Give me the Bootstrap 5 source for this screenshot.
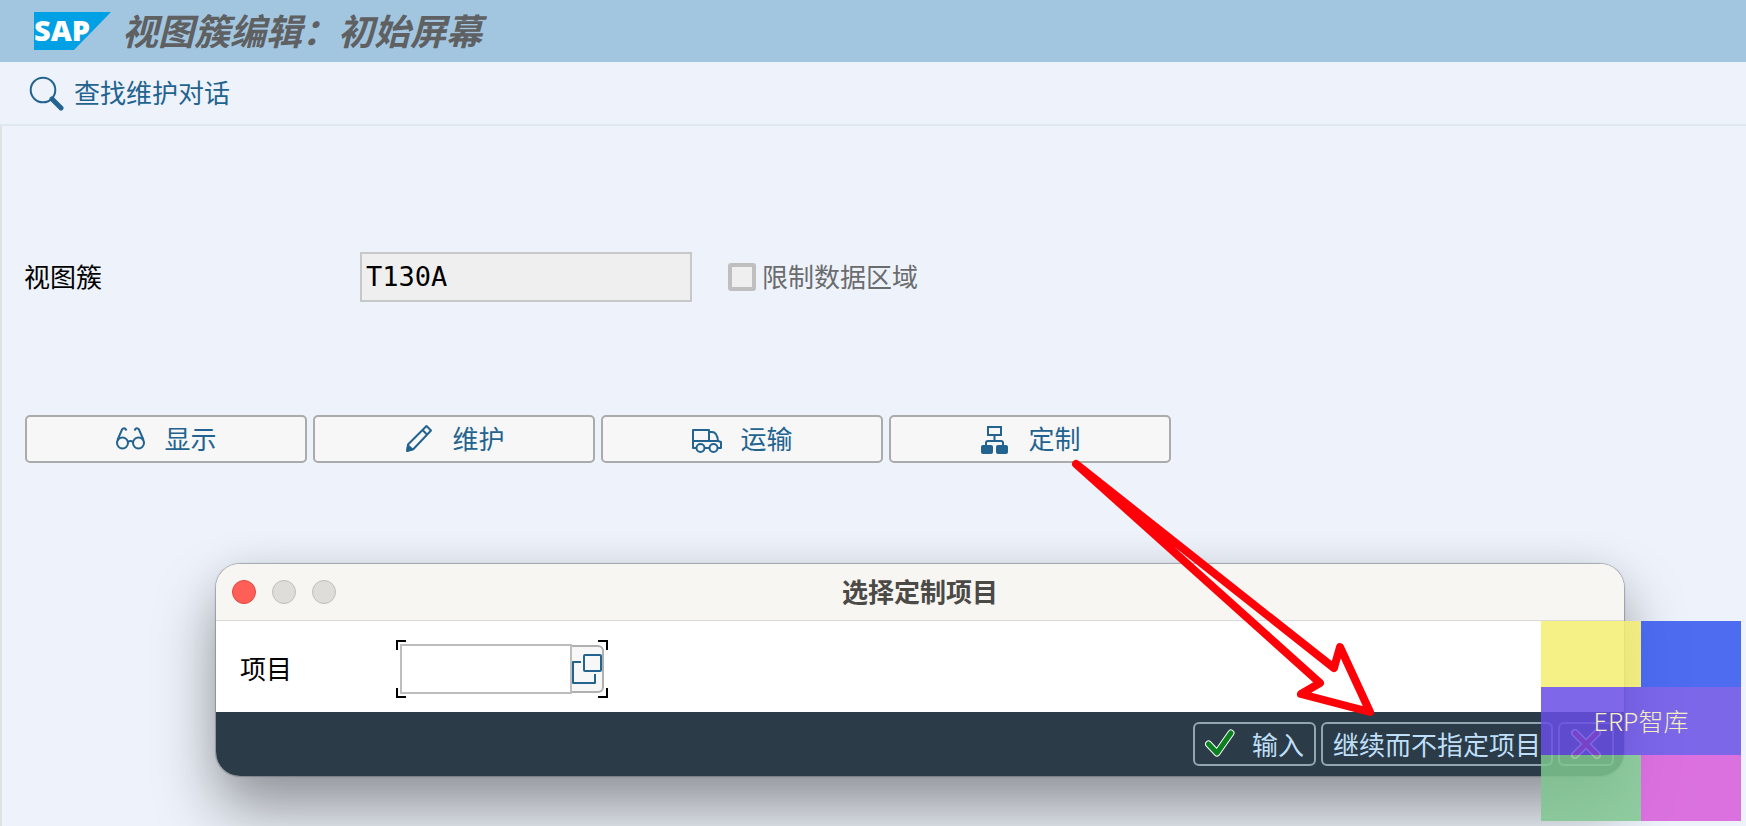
<!DOCTYPE html>
<html lang="zh-CN">
<head>
<meta charset="utf-8">
<meta name="viewport" content="width=device-width, initial-scale=1">
<title>视图簇编辑：初始屏幕</title>
<link href="https://cdn.jsdelivr.net/npm/bootstrap@5.3.0/dist/css/bootstrap.min.css" rel="stylesheet">
<style>
  :root { --sap-blue: #23638f; }
  body { font-family: "Noto Sans CJK SC", sans-serif; font-size: 26px; line-height: 32px; color: #000; background: #eef3fb; }
  .title-bar { height: 62px; padding: 0 0 4px 34px; gap: 10px; background: #a2c6e0; }
  .title-bar h1 { font-size: 36px; line-height: 48px; font-weight: 700; font-style: italic; color: #5f6062; }
  .tool-bar { height: 64px; padding: 0 0 2px 28px; border-bottom: 2px solid #dfe7f1; }
  .tool-link { gap: 8px; color: var(--sap-blue); }
  .work-area { border-left: 2px solid #dfe1e5; padding: 126px 0 0 22px; }
  .cluster-row label { padding-bottom: 2px; }
  .field-label { width: 336px; }
  .cluster-input { width: 332px; height: 50px; padding: 0 4px 2px; border: 2px solid #c6c8ca; border-radius: 0; font: 27px/32px "DejaVu Sans Mono", monospace; color: #000; }
  .cluster-input:disabled { background: #efefef; opacity: 1; }
  .limit-check { margin-left: 36px; gap: 6px; color: #6b6c6e; }
  .limit-check input { appearance: none; width: 28px; height: 28px; margin: 0; border: 4px solid #bfbfbf; border-radius: 3px; background: #efefef; }
  .action-row { gap: 6px; margin-top: 113px; padding-left: 1px; max-width: 1147px; }
  .action-btn { flex: 1 1 0; height: 48px; gap: 17px; padding: 0 0 2px; border: 2px solid #ababab; border-radius: 5px; background: #f7f7f7; color: var(--sap-blue); font-size: 26px; line-height: 32px; }
  .dialog-window { margin: 101px 122px 48px 192px; border-radius: 24px; background: #fff; box-shadow: 0 0 1px 1px rgba(70,80,90,.4), 0 34px 62px rgba(0,0,0,.38), 0 0 40px rgba(0,0,0,.06); }
  .dialog-head { height: 57px; padding: 0 16px; border-bottom: 1px solid #d9d9d7; background: #f7f6f2; border-radius: 24px 24px 0 0; }
  .dialog-head h2 { font-size: 26px; line-height: 32px; font-weight: 700; color: #4b4a46; padding-bottom: 2px; }
  .lights { flex: 1 1 0; gap: 16px; }
  .light-dot { width: 24px; height: 24px; padding: 0; border: 1px solid #bfbeba; border-radius: 50%; background: #dedddA; }
  .light-dot.close-dot { background: #ff5f57; border-color: #e2463f; }
  .dialog-body { height: 91px; padding: 4px 24px 0; }
  .dialog-body label { width: 156px; padding-bottom: 2px; }
  .focus-frame { width: 212px; height: 58px; padding: 4px; }
  .project-input { width: 172px; height: 50px; border: 2px solid #bdbdbd; border-radius: 0; padding: 0 4px; }
  .help-btn { width: 32px; height: 48px; padding: 0; border: 2px solid #b0b0b0; border-left: 0; border-radius: 0 6px 6px 0; background: #f7f7f7; }
  .corner-marks { left: 0; top: 0; pointer-events: none; }
  .dialog-foot { height: 64px; padding: 0 10px 1px 24px; gap: 5px; background: #2b3c48; border-radius: 0 0 24px 24px; }
  .foot-btn { height: 44px; padding: 0 10px; border: 2px solid #92a5b2; border-radius: 6px; background: transparent; color: #bfdff8; font-size: 26px; line-height: 32px; }
  .enter-btn { gap: 17px; }
  .cancel-btn { width: 56px; padding: 0; }
  .pointer-arrow { left: 1070px; top: 458px; pointer-events: none; }
  .brand-stamp { right: 5px; top: 621px; width: 200px; height: 200px; display: grid; grid-template: 66px 68px 66px / 1fr 1fr; pointer-events: none; }
  .stamp-name { grid-column: span 2; font-size: 25px; font-weight: 300; color: #f4eec0; padding-bottom: 2px; background: rgba(103,78,229,.85); }
  .stamp-yellow { background: rgba(245,239,113,.85); }
  .stamp-blue { background: rgba(48,84,236,.85); }
  .stamp-green { background: rgba(127,198,143,.85); }
  .stamp-pink { background: rgba(215,89,216,.85); }
</style>
</head>
<body class="position-relative min-vh-100 overflow-hidden d-flex flex-column">

<header class="title-bar d-flex align-items-center">
  <svg class="mt-1 overflow-visible" width="78" height="38" viewBox="0 0 78 38" role="img" aria-label="SAP">
    <path d="M0 0H77L40 38H0Z" fill="#00a0e4"/>
    <text x="0" y="29" font-family="Open Sans" font-size="29" font-weight="800" fill="#fff">SAP</text>
  </svg>
  <h1 class="m-0">视图簇编辑：初始屏幕</h1>
</header>

<nav class="tool-bar d-flex align-items-center">
  <a href="#" class="tool-link d-flex align-items-center text-decoration-none">
    <svg width="38" height="38" viewBox="0 0 38 38" fill="none" stroke="#23638f">
      <circle cx="15" cy="17" r="12.300" stroke-width="2"/>
      <path d="M24 26L33 35" stroke-width="5" stroke-linecap="round"/>
    </svg>
    查找维护对话
  </a>
</nav>

<main class="work-area flex-grow-1">
  <div class="cluster-row d-flex align-items-center">
    <label class="field-label" for="cluster">视图簇</label>
    <input class="cluster-input" id="cluster" type="text" value="T130A" disabled>
    <div class="limit-check d-flex align-items-center">
      <input type="checkbox" id="limit" disabled>
      <label for="limit">限制数据区域</label>
    </div>
  </div>

  <div class="action-row d-flex">
    <button type="button" class="action-btn d-flex align-items-center justify-content-center">
      <svg width="32" height="32" viewBox="0 0 32 32" fill="none" stroke="#23638f" stroke-width="2">
        <circle cx="7.500" cy="21" r="5.500"/><circle cx="23.500" cy="21" r="5.500"/>
        <path d="M13 20Q15.500 18 18 20M2.500 18L7 7.500Q9.500 4.500 11.500 8.500M28.500 18L24 7.500Q21.500 4.500 19.500 8.500"/>
      </svg>
      显示
    </button>
    <button type="button" class="action-btn d-flex align-items-center justify-content-center">
      <svg width="32" height="32" viewBox="0 0 32 32" fill="none" stroke="#23638f" stroke-width="2" stroke-linejoin="round">
        <path d="M5 22.500L23.500 4L28 8.500L10.500 27L4.500 28.500ZM19.500 8L24 12.500"/>
        <path d="M5 23.500L9.500 27.500L4 29Z" fill="#23638f"/>
      </svg>
      维护
    </button>
    <button type="button" class="action-btn d-flex align-items-center justify-content-center">
      <svg width="32" height="32" viewBox="0 0 32 32" fill="none" stroke="#23638f" stroke-width="2" stroke-linejoin="round">
        <path d="M5 26H2V8H18V19M2 19H28M18 10H21Q26 10 27 19L30 20V26H27M14 26H18"/>
        <circle cx="9.500" cy="26" r="4"/><circle cx="22.500" cy="26" r="4"/>
      </svg>
      运输
    </button>
    <button type="button" class="action-btn d-flex align-items-center justify-content-center">
      <svg width="32" height="32" viewBox="0 0 32 32" fill="none" stroke="#23638f" stroke-width="2">
        <rect x="9" y="5" width="13" height="8"/>
        <path d="M15.500 13V19M7 24V21Q7 19 9 19H22Q24 19 24 21V24"/>
        <rect x="2" y="23" width="12" height="9" rx="2" fill="#23638f" stroke="none"/>
        <rect x="17" y="23" width="12" height="9" rx="2" fill="#23638f" stroke="none"/>
      </svg>
      定制
    </button>
  </div>

  <section class="dialog-window" role="dialog" aria-labelledby="dlgTitle">
    <div class="dialog-head d-flex align-items-center">
      <div class="lights d-flex">
        <button type="button" class="light-dot close-dot" aria-label="关闭"></button>
        <button type="button" class="light-dot" aria-label="最小化" disabled></button>
        <button type="button" class="light-dot" aria-label="缩放" disabled></button>
      </div>
      <h2 class="m-0" id="dlgTitle">选择定制项目</h2>
      <div class="lights"></div>
    </div>
    <div class="dialog-body d-flex align-items-center">
      <label for="project">项目</label>
      <div class="focus-frame position-relative d-flex align-items-center">
        <svg class="corner-marks position-absolute" width="212" height="58" fill="none" stroke="#000" stroke-width="2">
          <path d="M1 10V1H10M202 1H211V10M211 48V57H202M10 57H1V48"/>
        </svg>
        <input class="project-input" id="project" type="text">
        <button type="button" class="help-btn d-flex align-items-center justify-content-center" aria-label="搜索帮助">
          <svg width="30" height="32" viewBox="0 0 30 32" fill="none" stroke="#23638f" stroke-width="2">
            <rect x="12" y="2" width="17" height="16" rx="1"/>
            <path d="M9 9H1V30H23V21" stroke-linejoin="round"/>
          </svg>
        </button>
      </div>
    </div>
    <div class="dialog-foot d-flex align-items-center justify-content-end">
      <button type="button" class="foot-btn enter-btn d-flex align-items-center">
        <svg width="30" height="30" viewBox="0 0 30 30" fill="none" stroke-linecap="round" stroke-linejoin="round">
          <path d="M3.500 15L12 24L26 4" stroke="#fff" stroke-width="7"/>
          <path d="M3.500 15L12 24L26 4" stroke="#0a8020" stroke-width="5"/>
        </svg>
        输入
      </button>
      <button type="button" class="foot-btn">继续而不指定项目</button>
      <button type="button" class="foot-btn cancel-btn d-flex align-items-center justify-content-center" aria-label="取消">
        <svg width="30" height="30" viewBox="0 0 30 30" fill="none" stroke-linecap="round">
          <path d="M4 4L26 26M26 4L4 26" stroke="#fff" stroke-width="8"/>
          <path d="M4 4L26 26M26 4L4 26" stroke="#d3121f" stroke-width="5"/>
        </svg>
      </button>
    </div>
  </section>
</main>

<svg class="pointer-arrow position-absolute" width="310" height="262" fill="none" stroke="#fe0008" stroke-width="8" stroke-linejoin="round" aria-hidden="true">
  <path d="M6 6L264 210L270 189L300 254L231 236L250 225Z"/>
</svg>

<div class="brand-stamp position-absolute">
  <div class="stamp-yellow"></div>
  <div class="stamp-blue"></div>
  <div class="stamp-name d-flex align-items-center justify-content-center">ERP智库</div>
  <div class="stamp-green"></div>
  <div class="stamp-pink"></div>
</div>

<script src="https://cdn.jsdelivr.net/npm/bootstrap@5.3.0/dist/js/bootstrap.bundle.min.js"></script>
</body>
</html>
